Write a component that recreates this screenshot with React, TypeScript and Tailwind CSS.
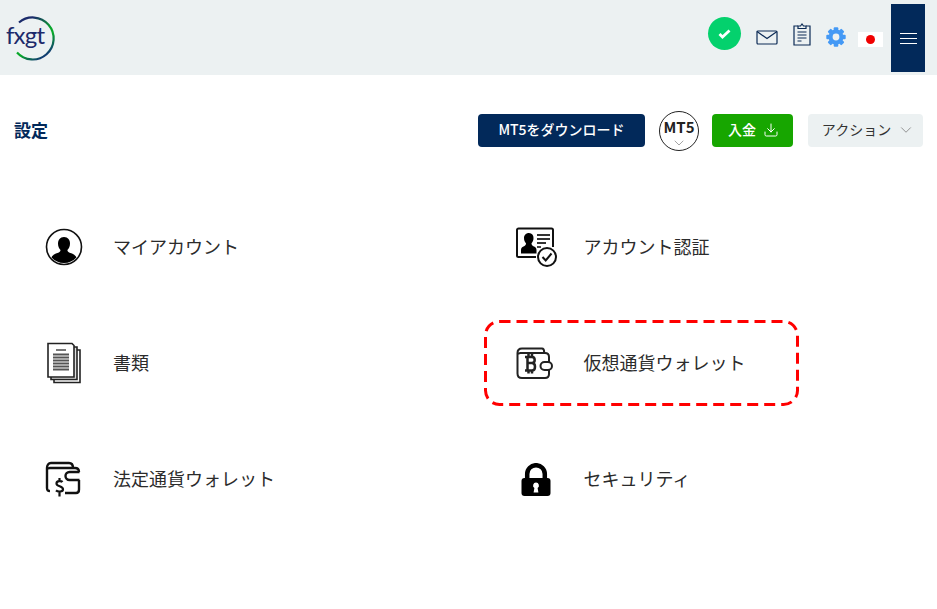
import * as React from "react";
import { ChevronDown, Download } from "lucide-react";

const font = { fontFamily: '"Noto Sans CJK JP", sans-serif' };

function Logo() {
  return (
    <svg width="56" height="50" viewBox="0 0 56 50" className="block">
      <defs>
        <linearGradient id="ring" x1="0.2" y1="0" x2="0.8" y2="1">
          <stop offset="0.1" stopColor="#1a2b6b" />
          <stop offset="0.5" stopColor="#08a82a" />
          <stop offset="0.62" stopColor="#08a82a" />
          <stop offset="0.95" stopColor="#12307a" />
        </linearGradient>
      </defs>
      <path d="M16 9.500A21 21 0 1 1 14 39.500" fill="none" stroke="url(#ring)" strokeWidth="2.200" />
      <text x="3" y="31" fontFamily="Lato, sans-serif" fontSize="24" textLength="39" fill="#1c2a6b">fxgt</text>
    </svg>
  );
}

function MailIcon() {
  return (
    <svg width="22" height="15" viewBox="0 0 22 15" fill="none" stroke="#0b2a55" strokeWidth="1.200">
      <rect x="1" y="1" width="20" height="13" rx="1" />
      <path d="M1 1.500l10 7 10-7" />
    </svg>
  );
}

function ClipboardIcon() {
  return (
    <svg width="20" height="23" viewBox="0 0 20 23" fill="none" stroke="#0b2a55" strokeWidth="1.200">
      <path d="M6 3H2v19h16V3h-4" />
      <path d="M6 5.500V3h2.500l1.500-2 1.500 2H14v2.500z" />
      <path d="M5.500 9h9M5.500 12h9M5.500 15h9M5.500 18h4" />
    </svg>
  );
}

function GearIcon() {
  const teeth = [0, 45, 90, 135, 180, 225, 270, 315];
  return (
    <svg width="20" height="20" viewBox="0 0 20 20">
      {teeth.map((a) => (
        <rect key={a} x="7.700" y="0.300" width="4.600" height="5" rx="1" fill="#4499f5" transform={`rotate(${a} 10 10)`} />
      ))}
      <circle cx="10" cy="10" r="5.400" fill="none" stroke="#4499f5" strokeWidth="4" />
    </svg>
  );
}

function UserIcon() {
  return (
    <svg width="38" height="38" viewBox="0 0 38 38">
      <circle cx="19" cy="19" r="17.500" fill="#fff" stroke="#111" strokeWidth="1.600" />
      <path d="M19 9c4 0 6 3 6 6.500 0 3-1 5-2.600 6.500 0 1.600 1 2.400 3 3 3 1 5 2 6 4.500A17 17 0 0 1 19 35a17 17 0 0 1-12.500-5.500c1-2.500 3-3.500 6-4.500 2-.6 3-1.400 3-3C14 20.500 13 18.500 13 15.500 13 12 15 9 19 9z" fill="#000" />
    </svg>
  );
}

function IdCheckIcon() {
  return (
    <svg width="41" height="41" viewBox="0 0 41 41" fill="none" className="ml-[3px]">
      <path d="M20 30H2.500A1.500 1.500 0 0 1 1 28.500V3a1.500 1.500 0 0 1 1.500-1.500h33A1.500 1.500 0 0 1 37 3v17" stroke="#111" strokeWidth="2" />
      <path d="M13 6c3 0 4.500 2.200 4.500 5 0 2.400-.8 4-2 5.200 0 2 1 2.600 2.500 3.200 1.500.6 2.500 1.400 2.500 3.600v3.500H5V23c0-2.200 1-3 2.500-3.600 1.500-.6 2.500-1.200 2.500-3.200-1.200-1.200-2-2.800-2-5.200C8 8.200 10 6 13 6z" fill="#000" />
      <path d="M21 8h13M21 12h13M21 16h9" stroke="#333" strokeWidth="1.800" />
      <path d="M21 20h4" stroke="#333" strokeWidth="1.800" />
      <circle cx="31" cy="30" r="9" fill="#fff" stroke="#111" strokeWidth="2" />
      <path d="M26.500 30l3.200 3.500 5.800-7" stroke="#111" strokeWidth="2" />
    </svg>
  );
}

function DocsIcon() {
  return (
    <svg width="36" height="42" viewBox="0 0 36 42" fill="none">
      <path d="M8 38v2.500h26V8h-3" stroke="#222" strokeWidth="1.600" />
      <path d="M5 35v2.500h26V5h-3" stroke="#222" strokeWidth="1.600" fill="#ddd" />
      <path d="M2 1.500h24l2 2V35H2z" fill="#fff" stroke="#222" strokeWidth="1.600" />
      <path d="M10 8h10" stroke="#777" strokeWidth="2" />
      <path d="M7 12.500h16M7 15.500h16M7 18.500h16M7 21.500h16M7 24.500h16M7 27.500h16" stroke="#555" strokeWidth="1.800" />
    </svg>
  );
}

function BtcWalletIcon() {
  return (
    <svg width="37" height="33" viewBox="0 0 37 33" fill="none" stroke="#222" strokeWidth="2">
      <path d="M1.500 6C1.500 3 3 1.500 6 1.500h20c1.500 0 2.200 1.300 2.200 4" />
      <path d="M1.500 6c0 1.500 1 0 3 0H29c2.500 0 4 1.500 4 4v5M33 23v4c0 2.500-1.500 4-4 4H6c-3 0-4.500-1.500-4.500-4.500V6" />
      <rect x="24.500" y="15" width="11.500" height="8" rx="4" />
      <path d="M9 10h7c3.600 0 3.600 6 0 6h-5m5 0c4 0 4 7.500 0 7.500H9M11.500 10v13.500M12.500 7v3M16 7v3M12.500 23.500v3M16 23.500v3" strokeWidth="2.500" />
    </svg>
  );
}

function UsdWalletIcon() {
  return (
    <svg width="36" height="37" viewBox="0 0 36 37" fill="none" stroke="#111" strokeWidth="2.400" className="mr-[3px]">
      <path d="M2 7c0-3 1.500-5 4-5h18c2.500 0 4 1.500 4 5" />
      <path d="M2 7c0 1 1 0 3 0h25c2.500 0 4 1.500 4 4M34 19v9.500c0 2-1 3.500-3 3.500H20M5 30c-2 0-3-1-3-3V7" />
      <path d="M34.500 11H24.500a4 4 0 0 0 0 8h10" />
      <path d="M17.500 21c-1-1.200-6-1.500-6 1.500 0 3.500 6.500 2 6.500 5.700 0 3-5.300 2.800-7 1.200M14.500 17v3M14.500 31.500v4" strokeWidth="2.200" />
    </svg>
  );
}

function LockIcon() {
  return (
    <svg width="30" height="33" viewBox="0 0 30 33" className="ml-[2px]">
      <path d="M6.200 17V11a8.800 8.800 0 0 1 17.600 0v6" fill="none" stroke="#000" strokeWidth="4.500" />
      <rect x="0.500" y="15" width="29" height="18" rx="3" fill="#000" />
      <path d="M15 19.500a3 3 0 0 1 1.600 5.500l.8 4.500h-4.800l.8-4.500a3 3 0 0 1 1.600-5.500z" fill="#fff" />
    </svg>
  );
}

const items = [
  { label: "マイアカウント", icon: <UserIcon /> },
  { label: "アカウント認証", icon: <IdCheckIcon /> },
  { label: "書類", icon: <DocsIcon /> },
  { label: "仮想通貨ウォレット", icon: <BtcWalletIcon />, marked: true },
  { label: "法定通貨ウォレット", icon: <UsdWalletIcon /> },
  { label: "セキュリティ", icon: <LockIcon /> },
];

function MenuItem({ label, icon, marked }: { label: string; icon: React.ReactNode; marked?: boolean }) {
  return (
    <div className="flex h-[116px] items-center">
      <div className={marked ? "relative -ml-[15.500px] flex h-[86px] w-[315px] items-center pl-[15.500px]" : "flex items-center"}>
        {marked && (
          <svg className="absolute inset-0" width="315" height="86" fill="none">
            <rect x="1.500" y="1.500" width="312" height="83" rx="14" stroke="#ff0000" strokeWidth="3" strokeDasharray="11 6" />
          </svg>
        )}
        <div className="flex w-[70px] shrink-0 justify-center">{icon}</div>
        <span className="mb-[2px] ml-[14px] text-[18px] text-[#2b2b2b]">{label}</span>
      </div>
    </div>
  );
}

export default function App() {
  return (
    <div className="h-[609px] w-[937px] overflow-hidden bg-white" style={font}>
      <header className="flex h-[75px] items-center bg-[#ecf1f2] pl-[3px] pr-[12px]">
        <Logo />
        <div className="ml-auto flex h-full items-start">
          <div className="mt-[17px] flex h-[33px] w-[33px] items-center justify-center rounded-full bg-[#04d16d]">
            <svg width="13" height="10" viewBox="0 0 13 10" fill="none" stroke="#fff" strokeWidth="2.800">
              <path d="M1.500 5l3 3 7-6.500" />
            </svg>
          </div>
          <div className="ml-[15px] mt-[30px]"><MailIcon /></div>
          <div className="ml-[14px] mt-[23px]"><ClipboardIcon /></div>
          <div className="ml-[14px] mt-[27px]"><GearIcon /></div>
          <div className="ml-[12px] mt-[32px] flex h-[15px] w-[25px] items-center justify-center bg-white">
            <div className="h-[9px] w-[9px] rounded-full bg-[#f00000]" />
          </div>
          <button className="ml-[8px] mt-[4px] flex h-[68px] w-[34px] flex-col items-center justify-center gap-[4px] bg-[#02295a]">
            <span className="h-px w-[17px] bg-white" />
            <span className="h-px w-[17px] bg-white" />
            <span className="h-px w-[17px] bg-white" />
          </button>
        </div>
      </header>

      <div className="flex h-[80px] items-center pl-[14px] pr-[14px] pt-[31px]">
        <h1 className="pb-[2px] text-[17px] font-bold text-[#02295a]">設定</h1>
        <div className="ml-auto flex items-center">
          <button className="flex h-[33px] w-[167px] items-center justify-center rounded-[4px] bg-[#02295a] pb-[2px] text-[14px] font-medium text-white">
            MT5をダウンロード
          </button>
          <div className="relative ml-[14px] flex h-[40px] w-[40px] justify-center rounded-full border border-[#222] bg-white">
            <span className="mt-[6px] text-[15px] font-bold leading-[18px] text-[#222]">MT5</span>
            <ChevronDown className="absolute bottom-[-1px] left-[11px] h-[16px] w-[16px] text-[#777]" strokeWidth={1} />
          </div>
          <button className="ml-[13px] flex h-[33px] w-[81px] items-center justify-center gap-[7px] rounded-[4px] bg-[#17a600] pb-[2px] pl-[2px] text-[14px] font-medium text-white">
            入金
            <Download className="h-[16px] w-[16px]" strokeWidth={1.500} />
          </button>
          <button className="ml-[15px] flex h-[33px] w-[115px] items-center justify-center gap-[6px] rounded-[4px] bg-[#ecf1f2] pb-[2px] pl-[6px] text-[14px] text-[#333]">
            アクション
            <ChevronDown className="h-[18px] w-[18px] text-[#888]" strokeWidth={1.200} />
          </button>
        </div>
      </div>

      <div className="mt-[34px] grid grid-cols-[470.500px_1fr] pl-[29px]">
        {items.map((item) => (
          <MenuItem key={item.label} {...item} />
        ))}
      </div>
    </div>
  );
}
